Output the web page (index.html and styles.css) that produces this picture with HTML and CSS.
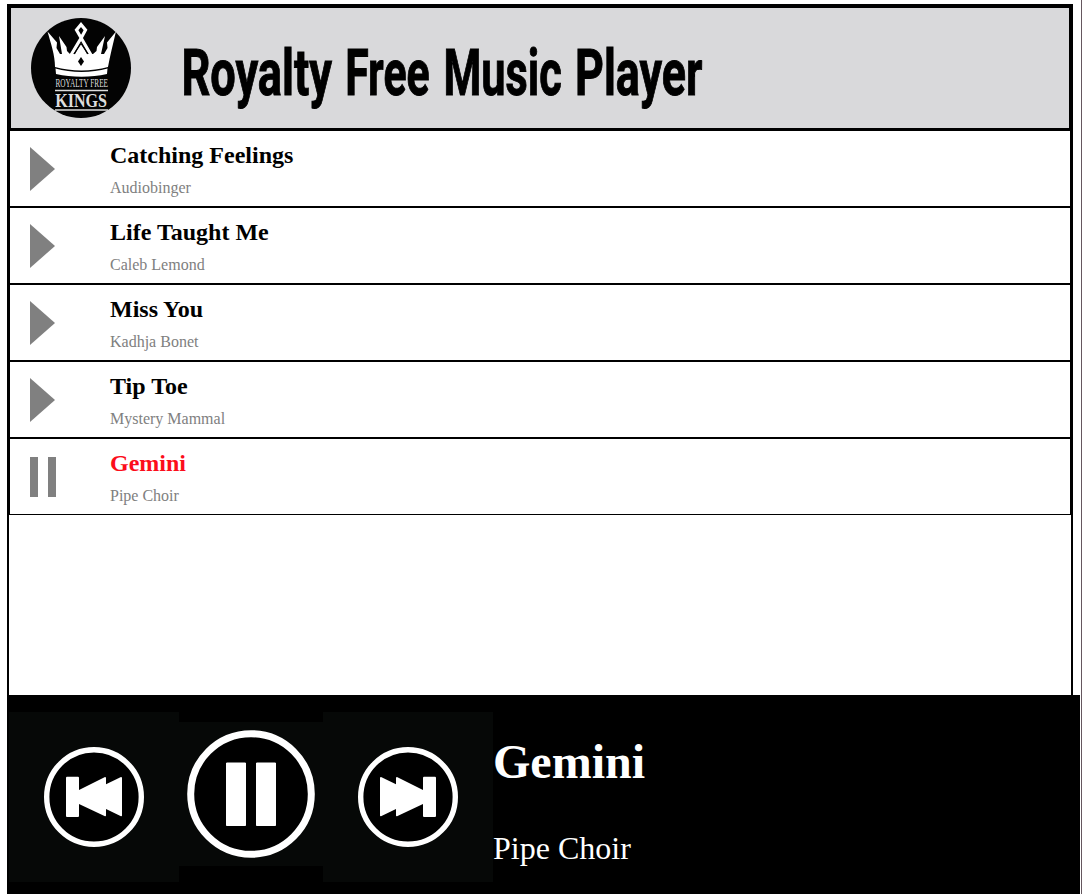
FILE: index.html
```html
<!DOCTYPE html>
<html lang="en">
<head>
<meta charset="utf-8">
<title>Royalty Free Music Player</title>
<link rel="stylesheet" href="styles.css">
</head>
<body>
<div class="page">
  <main class="player">
    <header class="header">
      <svg class="logo" width="100" height="100" viewBox="0 0 100 100">
        <circle cx="50" cy="50" r="50" fill="#030303"/>
        <path fill="#fff" d="M16.500 13.500L26 24.500L25.500 30L29 36H73L76.500 30L76 24.500L85 13.500C82 26 79 38 77 49C61 53.500 40 53.500 24 49C24 37 20 26 16.500 13.500Z"/>
        <path fill="#fff" d="M28 18L35.500 29L36 33L39 36H31ZM74 18L66 29L65.500 33L62 36H70Z"/>
        <path d="M40 37L51 18.500L54.500 12L50 6.500L45.500 12L49 18L60 37" fill="none" stroke="#fff" stroke-width="3.2"/>
        <path fill="#fff" d="M50 25L56.500 37H43.500Z"/>
        <path d="M43 36L50 25.500L57 36" fill="none" stroke="#030303" stroke-width="1.2"/>
        <path d="M50 39L53 43.500L50 48L47 43.500Z" fill="#030303"/>
        <path fill="#fff" d="M24.500 50.500C40 55 61 55 76.500 50.500L76 56C60 59.500 41 59.500 25 56Z"/>
        <g transform="scale(.72 1)">
          <text class="logo-text" x="34" y="69.500" font-size="11.500" textLength="73" lengthAdjust="spacingAndGlyphs">ROYALTY FREE</text>
        </g>
        <path fill="#ddd" d="M24 71.700H77V73.300H24ZM24 91.300H77V92.700H24Z"/>
        <g transform="scale(.85 1)">
          <text class="logo-text logo-kings" x="28.500" y="89" font-size="19.500" textLength="61" lengthAdjust="spacingAndGlyphs">KINGS</text>
        </g>
      </svg>
      <h1 class="heading">
        <svg class="wordmark" width="540" height="100" viewBox="0 0 540 100">
          <g transform="scale(.63 1)">
            <text x="-1" y="77" textLength="239" lengthAdjust="spacingAndGlyphs">Royalty</text>
            <text x="259" y="77" textLength="134" lengthAdjust="spacingAndGlyphs">Free</text>
            <text x="415" y="77" textLength="188" lengthAdjust="spacingAndGlyphs">Music</text>
            <text x="624" y="77" textLength="202" lengthAdjust="spacingAndGlyphs">Player</text>
          </g>
        </svg>
      </h1>
    </header>
    <ul class="songs">
      <li class="song"><svg class="state" width="26" height="44"><path d="M0 0L25 22L0 44Z"/></svg><div><h2 class="song-title">Catching Feelings</h2><p class="artist">Audiobinger</p></div></li>
      <li class="song"><svg class="state" width="26" height="44"><path d="M0 0L25 22L0 44Z"/></svg><div><h2 class="song-title">Life Taught Me</h2><p class="artist">Caleb Lemond</p></div></li>
      <li class="song"><svg class="state" width="26" height="44"><path d="M0 0L25 22L0 44Z"/></svg><div><h2 class="song-title">Miss You</h2><p class="artist">Kadhja Bonet</p></div></li>
      <li class="song"><svg class="state" width="26" height="44"><path d="M0 0L25 22L0 44Z"/></svg><div><h2 class="song-title">Tip Toe</h2><p class="artist">Mystery Mammal</p></div></li>
      <li class="song"><svg class="state" width="26" height="44"><path d="M0 2H8V42H0ZM18 2H26V42H18Z"/></svg><div><h2 class="song-title playing">Gemini</h2><p class="artist">Pipe Choir</p></div></li>
    </ul>
  </main>
  <footer class="controls">
    <svg class="button" width="170" height="170" viewBox="0 0 170 170">
      <circle cx="85" cy="85" r="47.3" fill="#000" stroke="#fff" stroke-width="5.4"/>
      <path fill="#fff" d="M58 64.700H69Q70 64.700 70 66V78L96 65Q97 65 97 66V72.300L112 65Q113 65 113 66V103.500Q113 104.500 112 104.300L97 97V103.500Q97 104.500 96 104.300L70 92V104Q70 105 69 105H58Q57 105 57 104V66Q57 64.700 58 64.700Z"/>
    </svg>
    <svg class="button pause" width="144" height="144" viewBox="0 0 144 144">
      <circle cx="72" cy="72" r="60.300" fill="#000" stroke="#fff" stroke-width="7"/>
      <path fill="#fff" stroke="#fff" stroke-width="1" stroke-linejoin="round" d="M47.500 41H66.500V103.500H47.500ZM77.500 41H96.500V103.500H77.500Z"/>
    </svg>
    <svg class="button" width="170" height="170" viewBox="0 0 170 170">
      <circle cx="85" cy="85" r="47.3" fill="#000" stroke="#fff" stroke-width="5.4"/>
      <path transform="translate(170 0) scale(-1 1)" fill="#fff" d="M58 64.700H69Q70 64.700 70 66V78L96 65Q97 65 97 66V72.300L112 65Q113 65 113 66V103.500Q113 104.500 112 104.300L97 97V103.500Q97 104.500 96 104.300L70 92V104Q70 105 69 105H58Q57 105 57 104V66Q57 64.700 58 64.700Z"/>
    </svg>
    <div class="now">
      <h2 class="now-title">Gemini</h2>
      <p class="now-artist">Pipe Choir</p>
    </div>
  </footer>
</div>
</body>
</html>
```
FILE: styles.css
```css
* { box-sizing: border-box; }
body {
  margin: 0;
  background: #fff;
  font-family: "Liberation Serif", "Times New Roman", serif;
}
h1, h2, p, ul { margin: 0; padding: 0; }
svg { display: block; flex: none; }
.page {
  height: 894px;
  padding: 4px 1px 0 7px;
  border-right: 1px solid #65575f;
  display: flex;
  flex-direction: column;
  overflow: hidden;
}
.player {
  width: 1066px;
  height: 691px;
  border: 2px solid #000;
  border-bottom: 0;
}
.header {
  height: 124px;
  border: 2px solid #000;
  background: #d9d9db;
  display: flex;
  align-items: center;
  padding-left: 20px;
  gap: 51px;
}
.logo-text { font-family: "Liberation Serif", serif; fill: #ddd; }
.logo-kings { font-weight: bold; }
.wordmark {
  font-family: Roboto, sans-serif;
  font-size: 65px;
  font-weight: 700;
  fill: #000;
  stroke: #000;
  stroke-width: 1px;
}
.songs { list-style: none; }
.song {
  height: 77px;
  border: 1px solid #000;
  padding: 1px 0 0 20px;
  display: flex;
  align-items: flex-start;
  gap: 54px;
}
.state { margin-top: 15px; fill: #808080; }
.song-title { margin-top: 9px; font-size: 24px; line-height: 28px; }
.playing { color: #fc0d1b; }
.artist { margin-top: 10px; font-size: 16px; line-height: 18px; color: #808080; }
.controls {
  height: 199px;
  padding: 0 0 1px 2px;
  background: #000;
  display: flex;
  align-items: center;
}
.button { background: #060807; margin-top: 5px; }
.pause { margin-top: 0; }
.now { padding-top: 12px; color: #fff; }
.now-title { font-size: 48px; line-height: 56px; }
.now-artist { margin-top: 40px; font-size: 32px; line-height: 36px; }
```
